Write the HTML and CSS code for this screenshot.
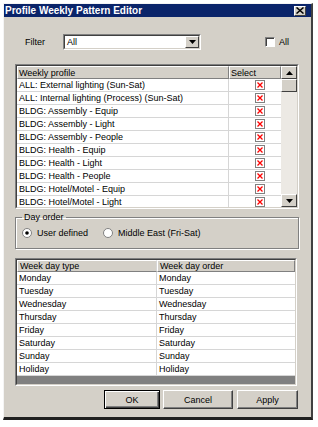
FILE: index.html
```html
<!DOCTYPE html>
<html>
<head>
<meta charset="utf-8">
<title>Profile Weekly Pattern Editor</title>
<link rel="stylesheet" href="styles.css">
</head>
<body>
<div class="win">
  <div class="titlebar">
    <span class="title">Profile Weekly Pattern Editor</span>
    <span class="close"><svg width="8" height="7" viewBox="0 0 8 7"><path d="M0.5 0.5 L7.5 6.5 M7.5 0.5 L0.5 6.5" stroke="#000" stroke-width="1.5"/></svg></span>
  </div>

  <div class="filter-row">
    <span class="lbl">Filter</span>
    <div class="combo sunken">
      <div class="sunken-in combo-in">
        <span class="combo-text">All</span>
        <span class="combo-btn"><svg width="7" height="4" viewBox="0 0 7 4"><path d="M0 0 H7 L3.5 4 Z" fill="#000"/></svg></span>
      </div>
    </div>
    <span class="chk"></span><span class="chk-lbl">All</span>
  </div>

  <div class="list sunken">
    <div class="sunken-in list-in">
      <div class="grid">
        <div class="row hdr"><div class="cell c1 hcell">Weekly profile</div><div class="cell c2 hcell">Select</div></div>
        <div class="row"><div class="cell c1">ALL: External lighting (Sun-Sat)</div><div class="cell c2"><svg class="xbox" width="10" height="10" viewBox="0 0 10 10"><rect x="0.5" y="0.5" width="9" height="9" fill="#fff" stroke="#808080"/><path d="M2.5 2.5 L7.5 7.5 M7.5 2.5 L2.5 7.5" stroke="#f00" stroke-width="1.3"/></svg></div></div>
        <div class="row"><div class="cell c1">ALL: Internal lighting (Process) (Sun-Sat)</div><div class="cell c2"><svg class="xbox" width="10" height="10" viewBox="0 0 10 10"><rect x="0.5" y="0.5" width="9" height="9" fill="#fff" stroke="#808080"/><path d="M2.5 2.5 L7.5 7.5 M7.5 2.5 L2.5 7.5" stroke="#f00" stroke-width="1.3"/></svg></div></div>
        <div class="row"><div class="cell c1">BLDG: Assembly - Equip</div><div class="cell c2"><svg class="xbox" width="10" height="10" viewBox="0 0 10 10"><rect x="0.5" y="0.5" width="9" height="9" fill="#fff" stroke="#808080"/><path d="M2.5 2.5 L7.5 7.5 M7.5 2.5 L2.5 7.5" stroke="#f00" stroke-width="1.3"/></svg></div></div>
        <div class="row"><div class="cell c1">BLDG: Assembly - Light</div><div class="cell c2"><svg class="xbox" width="10" height="10" viewBox="0 0 10 10"><rect x="0.5" y="0.5" width="9" height="9" fill="#fff" stroke="#808080"/><path d="M2.5 2.5 L7.5 7.5 M7.5 2.5 L2.5 7.5" stroke="#f00" stroke-width="1.3"/></svg></div></div>
        <div class="row"><div class="cell c1">BLDG: Assembly - People</div><div class="cell c2"><svg class="xbox" width="10" height="10" viewBox="0 0 10 10"><rect x="0.5" y="0.5" width="9" height="9" fill="#fff" stroke="#808080"/><path d="M2.5 2.5 L7.5 7.5 M7.5 2.5 L2.5 7.5" stroke="#f00" stroke-width="1.3"/></svg></div></div>
        <div class="row"><div class="cell c1">BLDG: Health - Equip</div><div class="cell c2"><svg class="xbox" width="10" height="10" viewBox="0 0 10 10"><rect x="0.5" y="0.5" width="9" height="9" fill="#fff" stroke="#808080"/><path d="M2.5 2.5 L7.5 7.5 M7.5 2.5 L2.5 7.5" stroke="#f00" stroke-width="1.3"/></svg></div></div>
        <div class="row"><div class="cell c1">BLDG: Health - Light</div><div class="cell c2"><svg class="xbox" width="10" height="10" viewBox="0 0 10 10"><rect x="0.5" y="0.5" width="9" height="9" fill="#fff" stroke="#808080"/><path d="M2.5 2.5 L7.5 7.5 M7.5 2.5 L2.5 7.5" stroke="#f00" stroke-width="1.3"/></svg></div></div>
        <div class="row"><div class="cell c1">BLDG: Health - People</div><div class="cell c2"><svg class="xbox" width="10" height="10" viewBox="0 0 10 10"><rect x="0.5" y="0.5" width="9" height="9" fill="#fff" stroke="#808080"/><path d="M2.5 2.5 L7.5 7.5 M7.5 2.5 L2.5 7.5" stroke="#f00" stroke-width="1.3"/></svg></div></div>
        <div class="row"><div class="cell c1">BLDG: Hotel/Motel - Equip</div><div class="cell c2"><svg class="xbox" width="10" height="10" viewBox="0 0 10 10"><rect x="0.5" y="0.5" width="9" height="9" fill="#fff" stroke="#808080"/><path d="M2.5 2.5 L7.5 7.5 M7.5 2.5 L2.5 7.5" stroke="#f00" stroke-width="1.3"/></svg></div></div>
        <div class="row"><div class="cell c1">BLDG: Hotel/Motel - Light</div><div class="cell c2"><svg class="xbox" width="10" height="10" viewBox="0 0 10 10"><rect x="0.5" y="0.5" width="9" height="9" fill="#fff" stroke="#808080"/><path d="M2.5 2.5 L7.5 7.5 M7.5 2.5 L2.5 7.5" stroke="#f00" stroke-width="1.3"/></svg></div></div>
      </div>
      <div class="vscroll">
        <div class="sbtn"><svg width="7" height="4" viewBox="0 0 7 4"><path d="M0 4 H7 L3.5 0 Z" fill="#000"/></svg></div>
        <div class="thumb"></div>
        <div class="track"></div>
        <div class="sbtn"><svg width="7" height="4" viewBox="0 0 7 4"><path d="M0 0 H7 L3.5 4 Z" fill="#000"/></svg></div>
      </div>
    </div>
  </div>

  <fieldset class="group">
    <legend>Day order</legend>
    <div class="radios">
      <span class="radio"><svg width="10" height="10" viewBox="0 0 10 10"><circle cx="5" cy="5" r="4.5" fill="#fff" stroke="#808080"/><circle cx="5" cy="5" r="1.8" fill="#000"/></svg>User defined</span>
      <span class="radio r2"><svg width="10" height="10" viewBox="0 0 10 10"><circle cx="5" cy="5" r="4.5" fill="#fff" stroke="#808080"/></svg>Middle East (Fri-Sat)</span>
    </div>
  </fieldset>

  <div class="days sunken">
    <div class="sunken-in days-in">
      <div class="drow dhdr"><div class="dcell d1 hcell">Week day type</div><div class="dcell d2 hcell">Week day order</div></div>
      <div class="drow"><div class="dcell d1">Monday</div><div class="dcell d2">Monday</div></div>
      <div class="drow"><div class="dcell d1">Tuesday</div><div class="dcell d2">Tuesday</div></div>
      <div class="drow"><div class="dcell d1">Wednesday</div><div class="dcell d2">Wednesday</div></div>
      <div class="drow"><div class="dcell d1">Thursday</div><div class="dcell d2">Thursday</div></div>
      <div class="drow"><div class="dcell d1">Friday</div><div class="dcell d2">Friday</div></div>
      <div class="drow"><div class="dcell d1">Saturday</div><div class="dcell d2">Saturday</div></div>
      <div class="drow"><div class="dcell d1">Sunday</div><div class="dcell d2">Sunday</div></div>
      <div class="drow"><div class="dcell d1">Holiday</div><div class="dcell d2">Holiday</div></div>
    </div>
  </div>

  <div class="buttons">
    <button class="btn btn-ok">OK</button>
    <button class="btn btn-cancel">Cancel</button>
    <button class="btn btn-apply">Apply</button>
  </div>
</div>
</body>
</html>
```

FILE: styles.css
```css
* { box-sizing: border-box; }

body {
  margin: 0;
  background: #fff;
  font-family: "Liberation Sans", Arial, sans-serif;
  font-size: 9px;
  color: #000;
}

.win {
  margin: 3px 0 0 3px;
  width: 310px;
  height: 417px;
  background: #d4d0c8;
  border-style: solid;
  border-width: 1px 2px 3px 1px;
  border-color: #f4f4f4 #404040 #202020 #f4f4f4;
  display: flex;
  flex-direction: column;
}

.titlebar {
  height: 13px;
  background: #0a246a;
  color: #fff;
  font-weight: bold;
  font-size: 10px;
  display: flex;
  align-items: center;
  justify-content: space-between;
  padding: 0 5px 0 1px;
}

.close {
  width: 12px;
  height: 10px;
  background: #d4d0c8;
  border: 1px solid;
  border-color: #fff #404040 #404040 #fff;
  display: flex;
  align-items: center;
  justify-content: center;
}

.filter-row {
  margin-top: 17px;
  height: 16px;
  display: flex;
  align-items: center;
}

.lbl {
  margin-left: 21px;
  width: 38px;
}

.sunken {
  border: 1px solid;
  border-color: #808080 #fff #fff #808080;
}

.sunken-in {
  border: 1px solid;
  border-color: #404040 #d4d0c8 #d4d0c8 #404040;
}

.combo {
  width: 138px;
  height: 16px;
}

.combo-in {
  height: 100%;
  background: #fff;
  display: flex;
  align-items: center;
}

.combo-text {
  flex: 1;
  padding-left: 2px;
}

.combo-btn {
  width: 14px;
  height: 100%;
  background: #d4d0c8;
  border: 1px solid;
  border-color: #fff #404040 #404040 #fff;
  display: flex;
  align-items: center;
  justify-content: center;
}

.chk {
  margin-left: 64px;
  width: 10px;
  height: 10px;
  background: #fff;
  border: 1px solid;
  border-color: #808080 #fff #fff #808080;
  box-shadow: inset 1px 1px #404040;
}

.chk-lbl {
  margin-left: 4px;
}

.list {
  margin: 14px 0 0 11px;
  width: 284px;
  height: 145px;
}

.list-in {
  height: 100%;
  display: flex;
  background: #fff;
  overflow: hidden;
}

.grid {
  flex: 1;
  overflow: hidden;
}

.row {
  display: flex;
  height: 13px;
  border-bottom: 1px solid #d6d6d6;
}

.row.hdr {
  border-bottom: none;
}

.cell {
  display: flex;
  align-items: center;
  white-space: nowrap;
  overflow: hidden;
}

.c1 {
  width: 212px;
  padding-left: 2px;
  border-right: 1px solid #d6d6d6;
}

.c2 {
  flex: 1;
  padding-left: 26px;
}

.hcell {
  background: #d4d0c8;
  border: 1px solid;
  border-color: #fff #808080 #808080 #fff;
}

.hdr .c1 { padding-left: 1px; }
.hdr .c2 { padding-left: 1px; }

.xbox { display: block; }

.vscroll {
  width: 16px;
  display: flex;
  flex-direction: column;
  background: #ece9e4;
}

.sbtn {
  height: 13px;
  background: #d4d0c8;
  border: 1px solid;
  border-color: #fff #404040 #404040 #fff;
  display: flex;
  align-items: center;
  justify-content: center;
}

.thumb {
  height: 13px;
  background: #d4d0c8;
  border: 1px solid;
  border-color: #fff #404040 #404040 #fff;
}

.track {
  flex: 1;
}

.group {
  margin: 3px 0 0 11px;
  width: 284px;
  height: 37px;
  padding: 0 0 0 6px;
  border: 1px solid #808080;
  box-shadow: 1px 1px 0 #fff, inset 1px 1px 0 #fff;
  min-inline-size: 0;
}

.group legend {
  padding: 0 2px;
  margin-left: 0;
  line-height: 11px;
}

.radios {
  display: flex;
  align-items: center;
  margin-top: 5px;
}

.radio {
  display: flex;
  align-items: center;
  white-space: nowrap;
}

.radio svg {
  margin-right: 5px;
}

.r2 {
  margin-left: 15px;
}

.days {
  margin: 9px 0 0 11px;
  width: 282px;
  height: 128px;
}

.days-in {
  height: 100%;
  background: #808080;
  overflow: hidden;
}

.drow {
  display: flex;
  height: 13px;
  background: #fff;
  border-bottom: 1px solid #d6d6d6;
}

.drow.dhdr {
  height: 12px;
  border-bottom: none;
}

.dcell {
  display: flex;
  align-items: center;
  white-space: nowrap;
  padding-left: 2px;
}

.d1 {
  width: 140px;
  border-right: 1px solid #d6d6d6;
}

.d2 {
  flex: 1;
}

.buttons {
  margin-top: 4px;
  display: flex;
  justify-content: flex-end;
  padding-right: 13px;
}

.btn {
  height: 19px;
  font-family: "Liberation Sans", Arial, sans-serif;
  font-size: 9px;
  color: #000;
  background: #d4d0c8;
  border: 1px solid;
  border-color: #fff #404040 #404040 #fff;
  box-shadow: inset -1px -1px 0 #808080;
  padding: 0;
}

.btn-ok {
  width: 56px;
  border-color: #000;
  box-shadow: inset 1px 1px 0 #fff, inset -1px -1px 0 #404040, inset -2px -2px 0 #808080;
}

.btn-cancel {
  width: 70px;
  margin-left: 3px;
}

.btn-apply {
  width: 61px;
  margin-left: 4px;
}
```
